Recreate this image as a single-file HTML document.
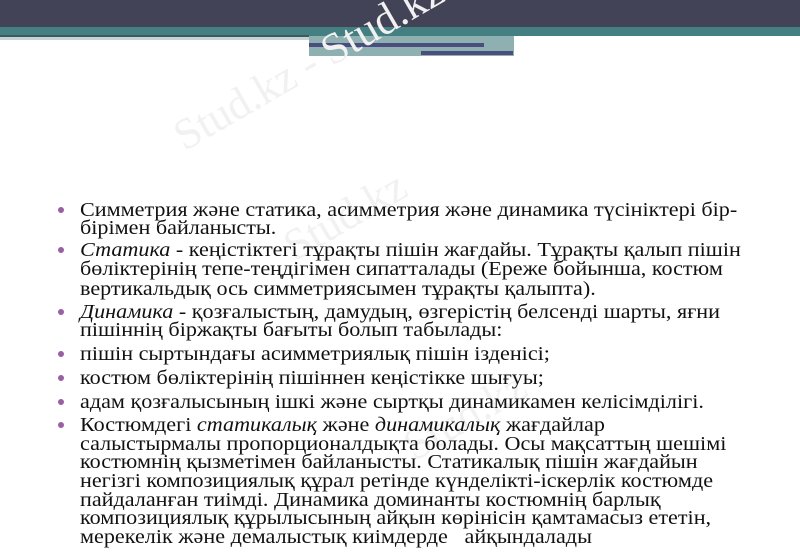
<!DOCTYPE html>
<html><head><meta charset="utf-8"><style>
body{margin:0;width:800px;height:553px;overflow:hidden;background:#fff;position:relative;font-family:"Liberation Serif",serif;}
.l{position:absolute;left:80px;font-size:20px;line-height:20px;color:#111;white-space:nowrap;transform:scaleX(1.107);transform-origin:left center;}
.b{position:absolute;left:58px;width:6px;height:6px;border-radius:50%;background:#9b5fa6;}
.wm{position:absolute;font-size:44px;color:#f1f1f1;transform:rotate(-30deg);transform-origin:left bottom;white-space:nowrap;font-family:"Liberation Serif",serif;}
</style></head><body>
<div style="position:absolute;left:0;top:0;width:800px;height:27px;background:#424356"></div>
<div style="position:absolute;left:0;top:27px;width:800px;height:9px;background:#447f81"></div>
<div style="position:absolute;left:0;top:35px;width:309px;height:2px;background:#3f5a5b"></div>
<div style="position:absolute;left:0;top:37px;width:309px;height:3px;background:#c5d3d6"></div>
<div style="position:absolute;left:309px;top:36px;width:205px;height:20px;background:#8fb0b1"></div>
<div style="position:absolute;left:309px;top:43px;width:175px;height:4px;background:#4b4d7e"></div>
<div style="position:absolute;left:421px;top:51px;width:92px;height:4px;background:#4b4d7e"></div>
<div style="position:absolute;left:514px;top:36px;width:286px;height:20px;background:#fff"></div>
<div class="wm" style="left:190px;top:110px">Stud.kz - Stud.kz</div>
<div class="wm" style="left:300px;top:220px">Stud.kz</div>
<div class="wm" style="left:420px;top:420px">Stud.kz</div>

<div class="b" style="top:207px"></div>
<div class="l" style="top:200px">Симметрия және статика, асимметрия және динамика түсініктері бір-</div>
<div class="l" style="top:218px">бірімен байланысты.</div>
<div class="b" style="top:247px"></div>
<div class="l" style="top:240px"><i>Статика</i> - кеңістіктегі тұрақты пішін жағдайы. Тұрақты қалып пішін</div>
<div class="l" style="top:259px">бөліктерінің тепе-теңдігімен сипатталады (Ереже бойынша, костюм</div>
<div class="l" style="top:279px">вертикальдық ось симметриясымен тұрақты қалыпта).</div>
<div class="b" style="top:309px"></div>
<div class="l" style="top:302px"><i>Динамика</i> - қозғалыстың, дамудың, өзгерістің белсенді шарты, яғни</div>
<div class="l" style="top:320px">пішіннің біржақты бағыты болып табылады:</div>
<div class="b" style="top:351px"></div>
<div class="l" style="top:344px">пішін сыртындағы асимметриялық пішін ізденісі;</div>
<div class="b" style="top:375px"></div>
<div class="l" style="top:368px">костюм бөліктерінің пішіннен кеңістікке шығуы;</div>
<div class="b" style="top:399px"></div>
<div class="l" style="top:392px">адам қозғалысының ішкі және сыртқы динамикамен келісімділігі.</div>
<div class="b" style="top:422px"></div>
<div class="l" style="top:415px">Костюмдегі <i>статикалық</i> және <i>динамикалық</i> жағдайлар</div>
<div class="l" style="top:434px">салыстырмалы пропорционалдықта болады. Осы мақсаттың шешімі</div>
<div class="l" style="top:452px">костюмнің қызметімен байланысты. Статикалық пішін жағдайын</div>
<div class="l" style="top:471px">негізгі композициялық құрал ретінде күнделікті-іскерлік костюмде</div>
<div class="l" style="top:490px">пайдаланған тиімді. Динамика доминанты костюмнің барлық</div>
<div class="l" style="top:508px">композициялық құрылысының айқын көрінісін қамтамасыз ететін,</div>
<div class="l" style="top:527px">мерекелік және демалыстық киімдерде &nbsp;&nbsp;айқындалады</div>
</body></html>
